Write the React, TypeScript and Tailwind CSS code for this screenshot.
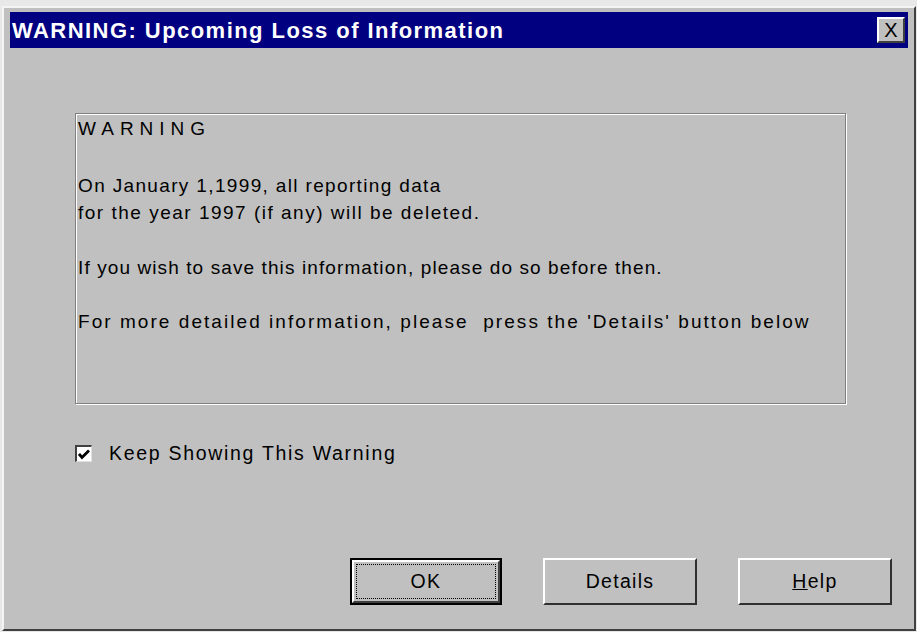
import React from "react";

export default function App() {
  const font = { fontFamily: '"Liberation Sans", Arial, sans-serif' };
  return (
    <div className="w-[917px] h-[632px] bg-[#e8e8e8] overflow-hidden" style={font}>
      <div className="ml-[2px] mt-[6px] w-[914px] h-[625px] bg-[#c0c0c0] border-t-2 border-l-2 border-t-[#f4f4f4] border-l-[#f4f4f4] border-b-2 border-r-2 border-b-[#404040] border-r-[#404040] flex flex-col px-[6px] pt-[4px]">
        <div className="h-[36px] bg-[#000080] flex items-center justify-between pl-[2px] pr-[3px]">
          <span className="text-white font-bold text-[22px] tracking-[1.45px]">WARNING: Upcoming Loss of Information</span>
          <div className="w-[28px] h-[26px] bg-[#c0c0c0] border-t-2 border-l-2 border-t-white border-l-white border-b-2 border-r-2 border-b-[#404040] border-r-[#404040] flex items-center justify-center text-[20px] text-black leading-none">
            X
          </div>
        </div>
        <div className="pl-[65px] pt-[65px]">
          <div className="w-[771px] h-[291px] border border-[#808080] shadow-[1px_1px_0_0_#ffffff,inset_1px_1px_0_0_#ffffff] pl-[2px] pt-[4px] text-black text-[19px] tracking-[1.1px]">
            <div className="tracking-[6px] leading-[22px]">WARNING</div>
            <div className="mt-[32px] leading-[27px]">
              <span className="tracking-[1.35px]">On January 1,1999, all reporting data</span>
              <br />
              <span className="tracking-[1.5px]">for the year 1997 (if any) will be deleted.</span>
            </div>
            <div className="mt-[28px] leading-[27px]">If you wish to save this information, please do so before then.</div>
            <div className="mt-[27px] leading-[27px] whitespace-pre tracking-[2.05px]">For more detailed information, please  press the 'Details' button below</div>
          </div>
          <div className="mt-[35px] flex items-center">
            <div className="w-[17px] h-[17px] bg-white border-t-2 border-l-2 border-t-[#404040] border-l-[#404040] border-b border-r border-b-[#e0e0e0] border-r-[#e0e0e0] flex items-center justify-center">
              <svg width="12" height="11" viewBox="0 0 12 11">
                <path d="M1 5 L4 8.5 L11 1.5" stroke="#000" strokeWidth="2.8" fill="none" />
              </svg>
            </div>
            <span className="ml-[17px] text-[19.5px] tracking-[1.7px] text-black">Keep Showing This Warning</span>
          </div>
        </div>
        <div className="flex-1" />
        <div className="flex justify-end gap-[41px] pr-[16px] pb-[24px] text-[19.5px] tracking-[1.3px] text-black">
          <div className="w-[152px] h-[47px] border-2 border-black">
            <div className="w-full h-full border-t-2 border-l-2 border-t-white border-l-white border-b-2 border-r-2 border-b-[#404040] border-r-[#404040] flex items-center justify-center p-[2px]">
              <div className="w-full h-full border border-dotted border-black flex items-center justify-center">OK</div>
            </div>
          </div>
          <div className="w-[154px] h-[47px] border-t-2 border-l-2 border-t-white border-l-white border-b-2 border-r-2 border-b-[#303030] border-r-[#303030] flex items-center justify-center">
            Details
          </div>
          <div className="w-[154px] h-[47px] border-t-2 border-l-2 border-t-white border-l-white border-b-2 border-r-2 border-b-[#303030] border-r-[#303030] flex items-center justify-center">
            <span><span className="underline">H</span>elp</span>
          </div>
        </div>
      </div>
    </div>
  );
}
